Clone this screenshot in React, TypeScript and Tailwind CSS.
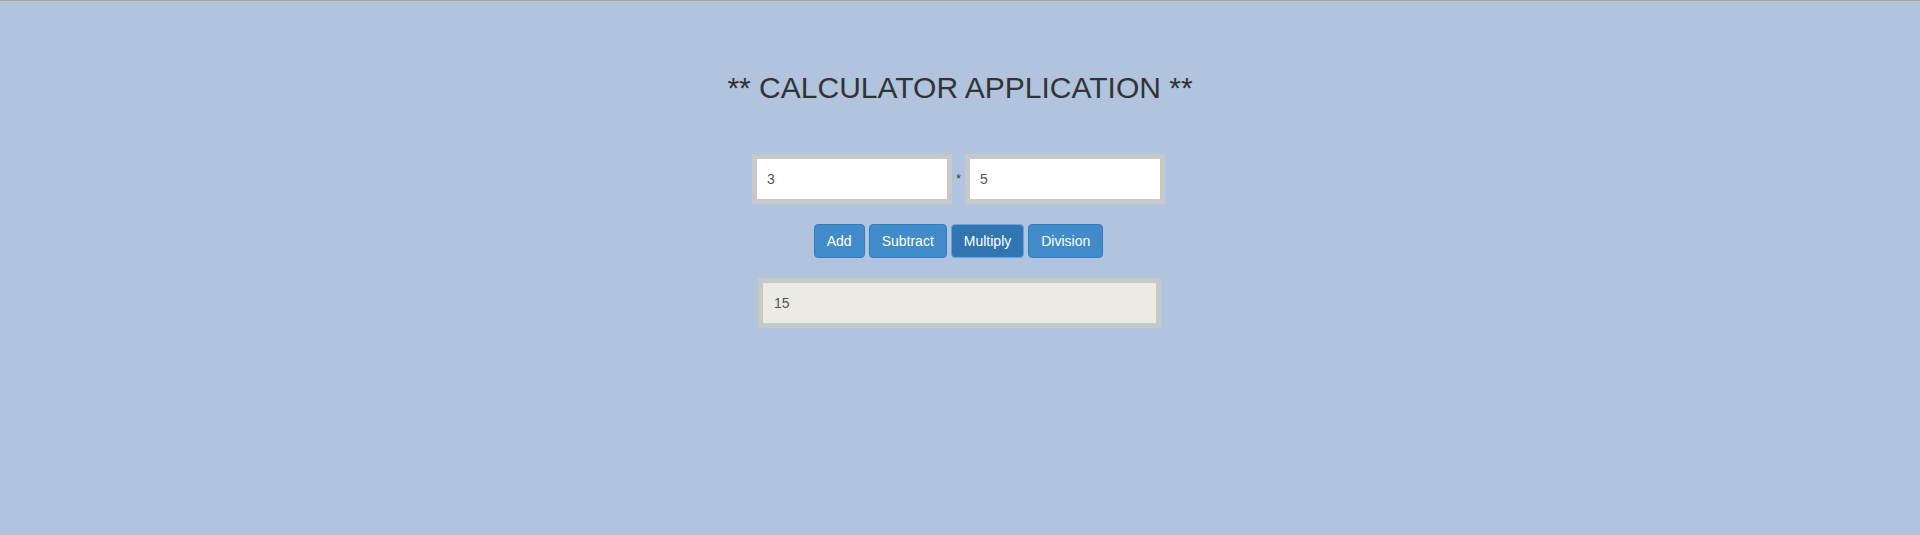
import { useState } from 'react'

const FONT = { fontFamily: '"Liberation Sans", Arial, sans-serif' }

const OPS = [
  { label: 'Add', fn: (a: number, b: number) => a + b, sign: '+' },
  { label: 'Subtract', fn: (a: number, b: number) => a - b, sign: '-' },
  { label: 'Multiply', fn: (a: number, b: number) => a * b, sign: '*' },
  { label: 'Division', fn: (a: number, b: number) => a / b, sign: '/' },
]

export default function App() {
  const [a, setA] = useState('3')
  const [b, setB] = useState('5')
  const [op, setOp] = useState(2)
  const result = OPS[op].fn(Number(a), Number(b))

  return (
    <div className="min-h-[535px] bg-[#b0c4de] border-t border-[#a3a3a3] text-[14px] text-[#333]" style={FONT}>
      <h2 className="pt-[70px] text-center text-[30px] leading-[33px] font-normal">
        ** CALCULATOR APPLICATION **
      </h2>

      <div className="mt-[50px] flex items-center justify-center -ml-[3px]">
        <input
          value={a}
          onChange={(e) => setA(e.target.value)}
          className="w-[200px] h-[50px] border-[5px] border-[#c8c8c8] bg-white pl-[10px] text-[14px] text-[#555] outline-none"
        />
        <span className="w-[13px] text-center text-[12px] leading-none">{OPS[op].sign}</span>
        <input
          value={b}
          onChange={(e) => setB(e.target.value)}
          className="w-[200px] h-[50px] border-[5px] border-[#c8c8c8] bg-white pl-[10px] text-[14px] text-[#555] outline-none"
        />
      </div>

      <div className="mt-[20px] flex justify-center gap-[4px] -ml-[3px]">
        {OPS.map((o, i) => (
          <button
            key={o.label}
            onClick={() => setOp(i)}
            className={`h-[34px] px-[12px] rounded-[4px] border text-[14px] leading-[20px] text-white ${
              op === i ? 'bg-[#3276b1] border-[#66a3e0]' : 'bg-[#428bca] border-[#357ebd]'
            }`}
          >
            {o.label}
          </button>
        ))}
      </div>

      <div className="mt-[20px] flex justify-center">
        <div className="w-[403px] h-[50px] border-[5px] border-[#c8c8c8] bg-[#ebebe3] pl-[11px] flex items-center text-[14px] text-[#555] -ml-[1px]">
          {Number.isFinite(result) ? result : ''}
        </div>
      </div>
    </div>
  )
}
